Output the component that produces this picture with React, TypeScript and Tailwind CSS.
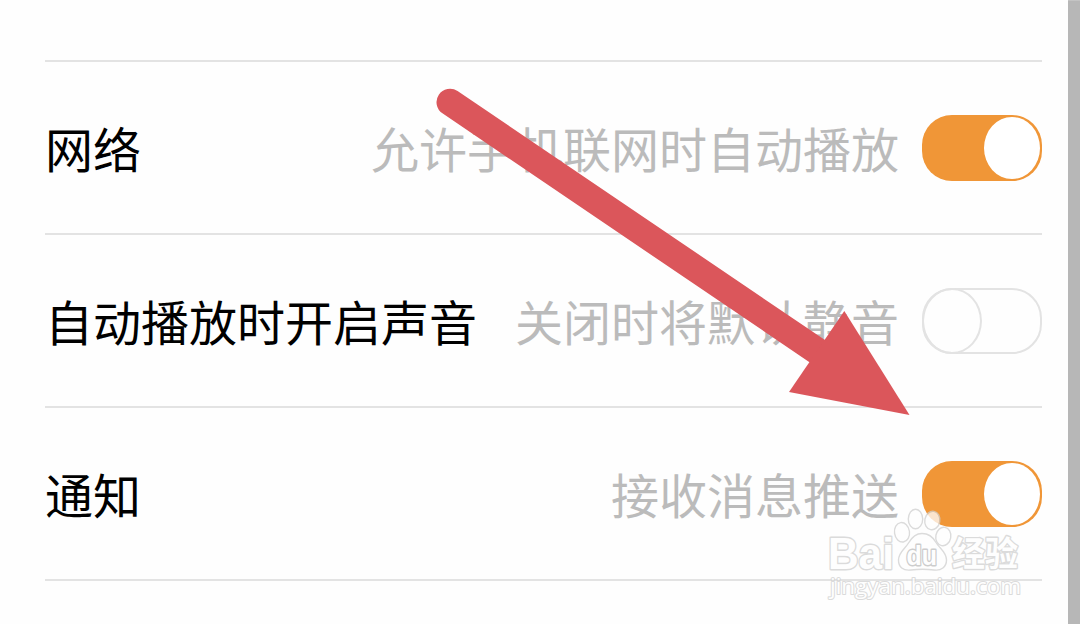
const rows = [
    { title: '网络', hint: '允许手机联网时自动播放', on: true },
    { title: '自动播放时开启声音', hint: '关闭时将默认静音', on: false },
    { title: '通知', hint: '接收消息推送', on: true },
]

function Toggle({ on }: { on: boolean }) {
    if (on) {
        return (
            <div className="flex h-[66px] w-[120px] shrink-0 items-center justify-end rounded-[30px] bg-[#f09637] pr-0.5">
                <div className="h-[62px] w-14 rounded-[50%] bg-white" />
            </div>
        )
    }

    return (
        <div className="flex h-[66px] w-[120px] shrink-0 rounded-[30px] border-2 border-[#e3e3e3]">
            <div className="-mt-0.5 -ml-0.5 h-[66px] w-[60px] rounded-[50%] border-2 border-[#e3e3e3]" />
        </div>
    )
}

function Arrow() {
    return (
        <svg className="absolute inset-0" width="1080" height="624" viewBox="0 0 1080 624">
            <path d="M450 102.2 L820 353" stroke="#db565b" strokeWidth="27" strokeLinecap="round" />
            <path d="M844.3 311 L909.5 415 L789 392 Z" fill="#db565b" />
        </svg>
    )
}

function Watermark() {
    return (
        <svg
            className="absolute top-[500px] left-[820px] opacity-75"
            width="210"
            height="110"
            viewBox="0 0 210 110"
            fill="#fff"
            stroke="#d0d0d0"
            strokeLinejoin="round"
        >
            {/* Paw */}
            <g strokeWidth="1.4">
                <ellipse cx="82" cy="32.300" rx="7.500" ry="9.800" transform="rotate(-8 82 32.300)" />
                <ellipse cx="95.500" cy="19" rx="7.200" ry="9.800" />
                <ellipse cx="112.300" cy="20.500" rx="7.500" ry="9.300" transform="rotate(10 112.300 20.500)" />
                <ellipse cx="123.300" cy="36.500" rx="7.500" ry="9.300" transform="rotate(10 123.300 36.500)" />
                <path d="M102 33.500 C109 33.500 113 37 116 42.500 C119.500 48.500 126.500 52 126.500 60 C126.500 67 121 71 114 70 C107 69 98 69 91 70 C83 71 78.500 67 78.500 60 C78.500 52 85 49 88.500 43 C92 37 96 33.500 102 33.500 Z" />
            </g>
            <g className="font-['Liberation_Sans','Noto_Sans_CJK_SC',sans-serif] font-bold" paintOrder="stroke" strokeWidth="2.8">
                <text x="8" y="68.500" fontSize="44" textLength="66" lengthAdjust="spacingAndGlyphs">Bai</text>
                <text x="86.500" y="64.500" fontSize="27" textLength="30.500" lengthAdjust="spacingAndGlyphs" stroke="#bdbdbd">du</text>
                <text x="132" y="65.500" fontSize="34" textLength="66" lengthAdjust="spacingAndGlyphs">经验</text>
            </g>
            <text
                className="font-['Open_Sans',sans-serif] font-medium"
                x="10"
                y="94"
                fontSize="21"
                paintOrder="stroke"
                strokeWidth="2"
                textLength="191"
                lengthAdjust="spacingAndGlyphs"
            >
                jingyan.baidu.com
            </text>
        </svg>
    )
}

export default function App() {
    return (
        <div className="relative flex h-[624px] w-[1080px] overflow-hidden bg-[#fefefe] font-['Noto_Sans_CJK_SC',sans-serif]">
            <div className="flex-1 pt-[60px] pr-[26px] pl-[45px]">
                <div className="border-t-2 border-[#e3e3e3]">
                    {rows.map((row) => (
                        <div key={row.title} className="flex h-[173px] items-center border-b-2 border-[#e3e3e3] text-5xl">
                            <span className="pb-0.5 whitespace-nowrap text-black">{row.title}</span>
                            <span className="mr-[23px] ml-auto pb-0.5 whitespace-nowrap text-[#bbb]">{row.hint}</span>
                            <Toggle on={row.on} />
                        </div>
                    ))}
                </div>
            </div>

            {/* Scrollbar */}
            <div className="w-3 border-t border-[#c4c4c4] bg-[#b7b7b7]" />

            <Arrow />
            <Watermark />
        </div>
    )
}
